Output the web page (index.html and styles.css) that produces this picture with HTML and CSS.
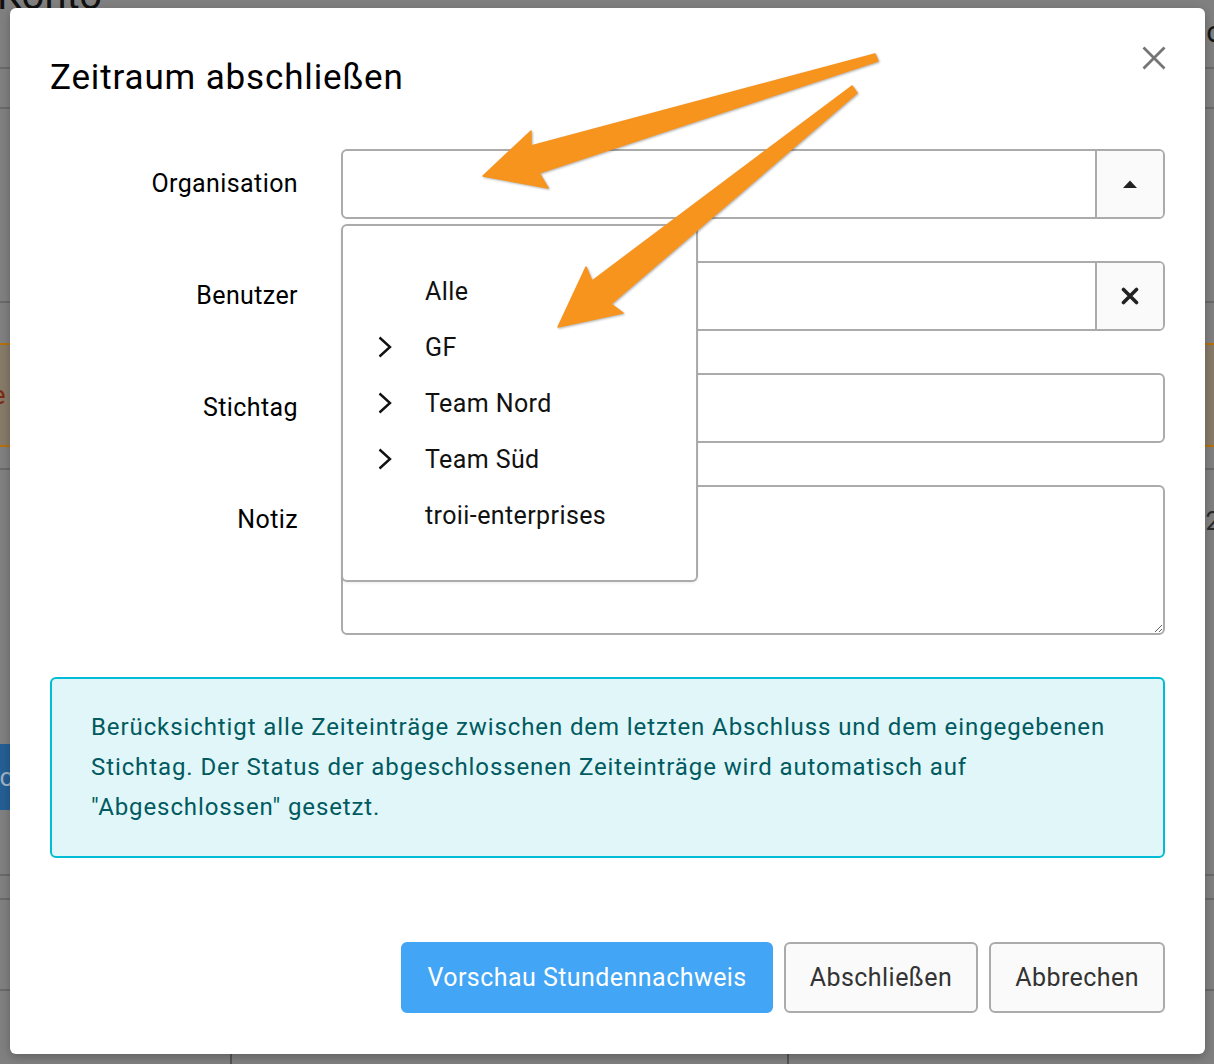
FILE: index.html
```html
<!DOCTYPE html>
<html lang="de">
  <head>
    <meta charset="UTF-8" />
    <meta name="viewport" content="width=device-width, initial-scale=1.0" />
    <title>Zeitraum abschließen</title>
    <link rel="stylesheet" href="styles.css">
  </head>
  <body>
    <!-- page behind the dialog (already dimmed) -->
    <div class="page">
      <div class="page-head">
        <h1 class="page-title">Konto</h1>
        <span class="page-head-side">c</span>
      </div>
      <div class="page-row row-short"></div>
      <div class="page-row row-tall"></div>
      <div class="notice"><span class="notice-text">Hinweis: Bitte beachte</span></div>
      <div class="page-row row-list">
        <div class="list-side">
          <span class="old-btn">Abc</span>
        </div>
        <span class="list-num">2</span>
      </div>
      <div class="page-row row-thin"></div>
      <div class="page-row row-mid"></div>
      <div class="page-cols">
        <div class="col col-a"></div>
        <div class="col col-b"></div>
        <div class="col col-c"></div>
      </div>
    </div>

    <div class="modal">
      <div class="modal-head">
        <h2 class="modal-title">Zeitraum abschließen</h2>
        <button class="close-btn" type="button" aria-label="Schließen">
          <svg width="26" height="26" viewBox="0 0 26 26">
            <path d="M2.5 2.5 L23.5 23.5 M23.5 2.5 L2.5 23.5" stroke="#757575" stroke-width="2.8" fill="none" />
          </svg>
        </button>
      </div>

      <form class="form">
        <div class="field">
          <label class="field-label">Organisation</label>
          <div class="control">
            <input class="control-input" type="text" />
            <span class="control-btn">
              <svg width="16" height="10" viewBox="0 0 16 10"><path d="M1 9 L8 1.5 L15 9 Z" fill="#222" /></svg>
            </span>

            <ul class="dropdown">
              <li class="dd-item"><span class="dd-chev"></span>Alle</li>
              <li class="dd-item">
                <span class="dd-chev"><svg width="14" height="22" viewBox="0 0 14 22"><path d="M1.5 1.5 L12 11 L1.5 20.5" stroke="#111" stroke-width="2.4" fill="none" /></svg></span>GF
              </li>
              <li class="dd-item">
                <span class="dd-chev"><svg width="14" height="22" viewBox="0 0 14 22"><path d="M1.5 1.5 L12 11 L1.5 20.5" stroke="#111" stroke-width="2.4" fill="none" /></svg></span>Team Nord
              </li>
              <li class="dd-item">
                <span class="dd-chev"><svg width="14" height="22" viewBox="0 0 14 22"><path d="M1.5 1.5 L12 11 L1.5 20.5" stroke="#111" stroke-width="2.4" fill="none" /></svg></span>Team Süd
              </li>
              <li class="dd-item"><span class="dd-chev"></span>troii-enterprises</li>
            </ul>
          </div>
        </div>

        <div class="field">
          <label class="field-label">Benutzer</label>
          <div class="control">
            <input class="control-input" type="text" />
            <span class="control-btn">
              <svg width="18" height="18" viewBox="0 0 18 18"><path d="M2.5 2.5 L15.5 15.5 M15.5 2.5 L2.5 15.5" stroke="#222" stroke-width="3.6" stroke-linecap="round" fill="none" /></svg>
            </span>
          </div>
        </div>

        <div class="field">
          <label class="field-label">Stichtag</label>
          <div class="control">
            <input class="control-input" type="text" />
          </div>
        </div>

        <div class="field">
          <label class="field-label">Notiz</label>
          <textarea class="note"></textarea>
        </div>
      </form>

      <div class="info">
        Berücksichtigt alle Zeiteinträge zwischen dem letzten Abschluss und dem eingegebenen
        Stichtag. Der Status der abgeschlossenen Zeiteinträge wird automatisch auf
        "Abgeschlossen" gesetzt.
      </div>

      <div class="actions">
        <button type="button" class="btn btn-primary">Vorschau Stundennachweis</button>
        <button type="button" class="btn">Abschließen</button>
        <button type="button" class="btn">Abbrechen</button>
      </div>
    </div>

    <!-- annotation arrows drawn over the screenshot -->
    <svg class="arrows" width="1214" height="1064" viewBox="0 0 1214 1064">
      <polygon points="875,54 531,146 531,131 483,176 548,188 539,173 878,61" />
      <polygon points="852,86 592,281 586,267 558,327 623,313 611,304 857,93" />
    </svg>
  </body>
</html>
```

FILE: styles.css
```css
* {
  box-sizing: border-box;
}

html,
body {
  margin: 0;
  width: 1214px;
  height: 1064px;
  overflow: hidden;
}

body {
  position: relative;
  font-family: Roboto, "Liberation Sans", Arial, sans-serif;
  background: #808080;
  color: #000;
}

/* ---------- dimmed page behind ---------- */

.page {
  display: flex;
  flex-direction: column;
}

.page-head {
  height: 69px;
  display: flex;
  justify-content: space-between;
  align-items: flex-start;
  border-bottom: 2px solid #6a6a6a;
}

.page-title {
  margin: -24px 0 0 -3px;
  font-size: 40px;
  font-weight: 400;
  line-height: 40px;
  color: #111;
}

.page-head-side {
  margin: 14px -8px 0 0;
  font-size: 30px;
  color: #151515;
}

.page-row {
  border-bottom: 2px solid #6a6a6a;
}

.row-short {
  height: 40px;
}

.row-tall {
  height: 194px;
}

.notice {
  margin-top: 40px;
  height: 104px;
  background: #877a69;
  border-top: 2px solid #b5710d;
  border-bottom: 2px solid #b5710d;
  display: flex;
  align-items: center;
  overflow: hidden;
}

.notice-text {
  margin-left: -252px;
  font-size: 26px;
  color: #7c2a12;
  white-space: nowrap;
}

.row-list {
  margin-top: 21px;
  height: 408px;
  border-top: 2px solid #6a6a6a;
  display: flex;
  justify-content: space-between;
  align-items: flex-start;
}

.list-side {
  padding-top: 274px;
}

.old-btn {
  display: flex;
  align-items: center;
  width: 100px;
  height: 66px;
  margin-left: -90px;
  padding-left: 58px;
  background: #255f95;
  color: #9fb2c6;
  font-size: 26px;
  overflow: hidden;
}

.list-num {
  margin: 36px -6px 0 0;
  font-size: 26px;
  color: #2a2a2a;
}

.row-thin {
  height: 24px;
}

.row-mid {
  height: 91px;
}

.page-cols {
  display: flex;
  height: 80px;
}

.col {
  border-right: 2px solid #555;
}

.col-a {
  width: 232px;
}

.col-b {
  width: 557px;
}

.col-c {
  flex: 1;
  border-right: none;
}

/* ---------- dialog ---------- */

.modal {
  position: absolute;
  left: 10px;
  top: 8px;
  width: 1195px;
  height: 1046px;
  padding: 0 40px 40px;
  background: #fff;
  border-radius: 6px;
  box-shadow: 0 3px 10px rgba(0, 0, 0, 0.25);
  display: flex;
  flex-direction: column;
}

.modal-head {
  display: flex;
  justify-content: space-between;
  align-items: flex-start;
  padding-top: 37px;
}

.modal-title {
  margin: 12px 0 0;
  font-size: 35px;
  font-weight: 400;
  line-height: 42px;
  letter-spacing: 0.85px;
}

.close-btn {
  margin-right: -2px;
  padding: 0;
  border: none;
  background: none;
  width: 26px;
  height: 26px;
  display: flex;
}

.form {
  margin-top: 50px;
  display: flex;
  flex-direction: column;
  gap: 42px;
}

.field {
  display: flex;
  align-items: flex-start;
  gap: 43px;
}

.field-label {
  width: 248px;
  flex-shrink: 0;
  text-align: right;
  font-size: 25px;
  line-height: 70px;
  letter-spacing: 0.4px;
}

.control {
  position: relative;
  flex: 1;
  height: 70px;
  display: flex;
  border: 2px solid #ababab;
  border-radius: 6px;
}

.control-input {
  flex: 1;
  min-width: 0;
  border: none;
  outline: none;
  background: transparent;
  border-radius: 4px;
  padding: 0 20px;
  font: inherit;
  font-size: 25px;
}

.control-btn {
  width: 68px;
  display: flex;
  justify-content: center;
  align-items: center;
  background: #fafafa;
  border-left: 2px solid #ababab;
  border-radius: 0 4px 4px 0;
}

.note {
  flex: 1;
  height: 150px;
  border: 2px solid #ababab;
  border-radius: 6px;
  padding: 18px 20px;
  font: inherit;
  font-size: 25px;
  resize: vertical;
  outline: none;
}

/* organisation tree popup */
.dropdown {
  position: absolute;
  top: 73px;
  left: -2px;
  z-index: 5;
  width: 357px;
  height: 358px;
  margin: 0;
  padding: 37px 0;
  list-style: none;
  background: #fff;
  border: 2px solid #ababab;
  border-radius: 6px;
  box-shadow: 0 1px 3px rgba(0, 0, 0, 0.08);
}

.dd-item {
  height: 56px;
  display: flex;
  align-items: center;
  padding-left: 35px;
  font-size: 25px;
  letter-spacing: 0.4px;
  color: #111;
}

.dd-chev {
  width: 14px;
  height: 22px;
  margin-right: 33px;
  display: flex;
}

.info {
  margin-top: 42px;
  padding: 28px 39px 29px;
  border: 2px solid #00bcd4;
  border-radius: 6px;
  background: #e0f6f9;
  color: #005a60;
  font-size: 24px;
  line-height: 40px;
  letter-spacing: 0.9px;
}

.actions {
  margin-top: 84px;
  display: flex;
  justify-content: flex-end;
  gap: 11px;
}

.btn {
  height: 71px;
  padding: 0 24px;
  border: 2px solid #ababab;
  border-radius: 6px;
  background: #fafafa;
  color: #333;
  font-family: inherit;
  font-size: 25px;
  letter-spacing: 0.45px;
  cursor: pointer;
}

.btn-primary {
  background: #42a5f5;
  border-color: #42a5f5;
  color: #fff;
}

/* ---------- annotations ---------- */

.arrows {
  position: absolute;
  left: 0;
  top: 0;
  z-index: 10;
  pointer-events: none;
  filter: drop-shadow(1px 1px 1px rgba(0, 0, 0, 0.3));
}

.arrows polygon {
  fill: #f7941e;
  stroke: #f7941e;
  stroke-width: 1.5;
  stroke-linejoin: round;
}
```
